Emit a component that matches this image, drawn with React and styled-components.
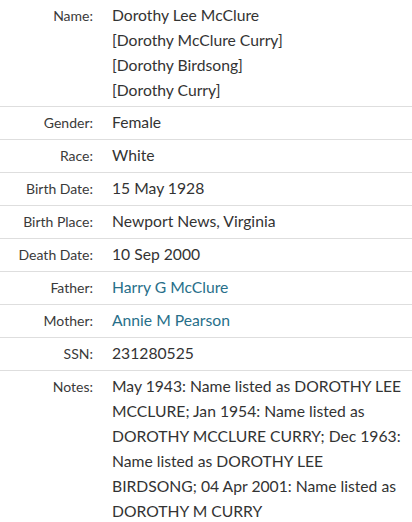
import React from 'react'
import styled, { createGlobalStyle } from 'styled-components'

const RECORD = [
  {
    label: 'Name',
    lines: ['Dorothy Lee McClure', '[Dorothy McClure Curry]', '[Dorothy Birdsong]', '[Dorothy Curry]']
  },
  { label: 'Gender', lines: ['Female'] },
  { label: 'Race', lines: ['White'] },
  { label: 'Birth Date', lines: ['15 May 1928'] },
  { label: 'Birth Place', lines: ['Newport News, Virginia'] },
  { label: 'Death Date', lines: ['10 Sep 2000'] },
  { label: 'Father', lines: ['Harry G McClure'], link: true },
  { label: 'Mother', lines: ['Annie M Pearson'], link: true },
  { label: 'SSN', lines: ['231280525'] },
  {
    label: 'Notes',
    lines: [
      'May 1943: Name listed as DOROTHY LEE MCCLURE; Jan 1954: Name listed as DOROTHY MCCLURE CURRY; Dec 1963: Name listed as DOROTHY LEE BIRDSONG; 04 Apr 2001: Name listed as DOROTHY M CURRY'
    ]
  }
]

const GlobalStyle = createGlobalStyle`
  body {
    margin: 0;
    background: #fff;
    font-family: Lato, 'Open Sans', sans-serif;
    color: #333;
  }
`

const Table = styled.dl`
  margin: 0;
`
const Row = styled.div`
  display: grid;
  grid-template-columns: 93px 1fr;
  column-gap: 19px;
  padding: 3px 10px ${({ first }) => (first ? '3px' : '4px')} 0;
  border-bottom: ${({ last }) => (last ? 'none' : '1px solid #dedede')};
`
const Label = styled.dt`
  text-align: right;
  font-size: 14px;
  line-height: 25px;
  color: #3a3a3a;
`
const Value = styled.dd`
  margin: 0;
  font-size: 15.7px;
  line-height: 25px;
`
const Line = styled.div``
const PersonLink = styled.a`
  color: #276f8a;
  text-decoration: none;
`

const App = () => {
  return (
    <>
      <GlobalStyle />
      <Table>
        {RECORD.map((row, i) => (
          <Row key={row.label} first={i === 0} last={i === RECORD.length - 1}>
            <Label>{row.label}:</Label>
            <Value>
              {row.lines.map(line => (
                <Line key={line}>{row.link ? <PersonLink href='#'>{line}</PersonLink> : line}</Line>
              ))}
            </Value>
          </Row>
        ))}
      </Table>
    </>
  )
}

export default App
